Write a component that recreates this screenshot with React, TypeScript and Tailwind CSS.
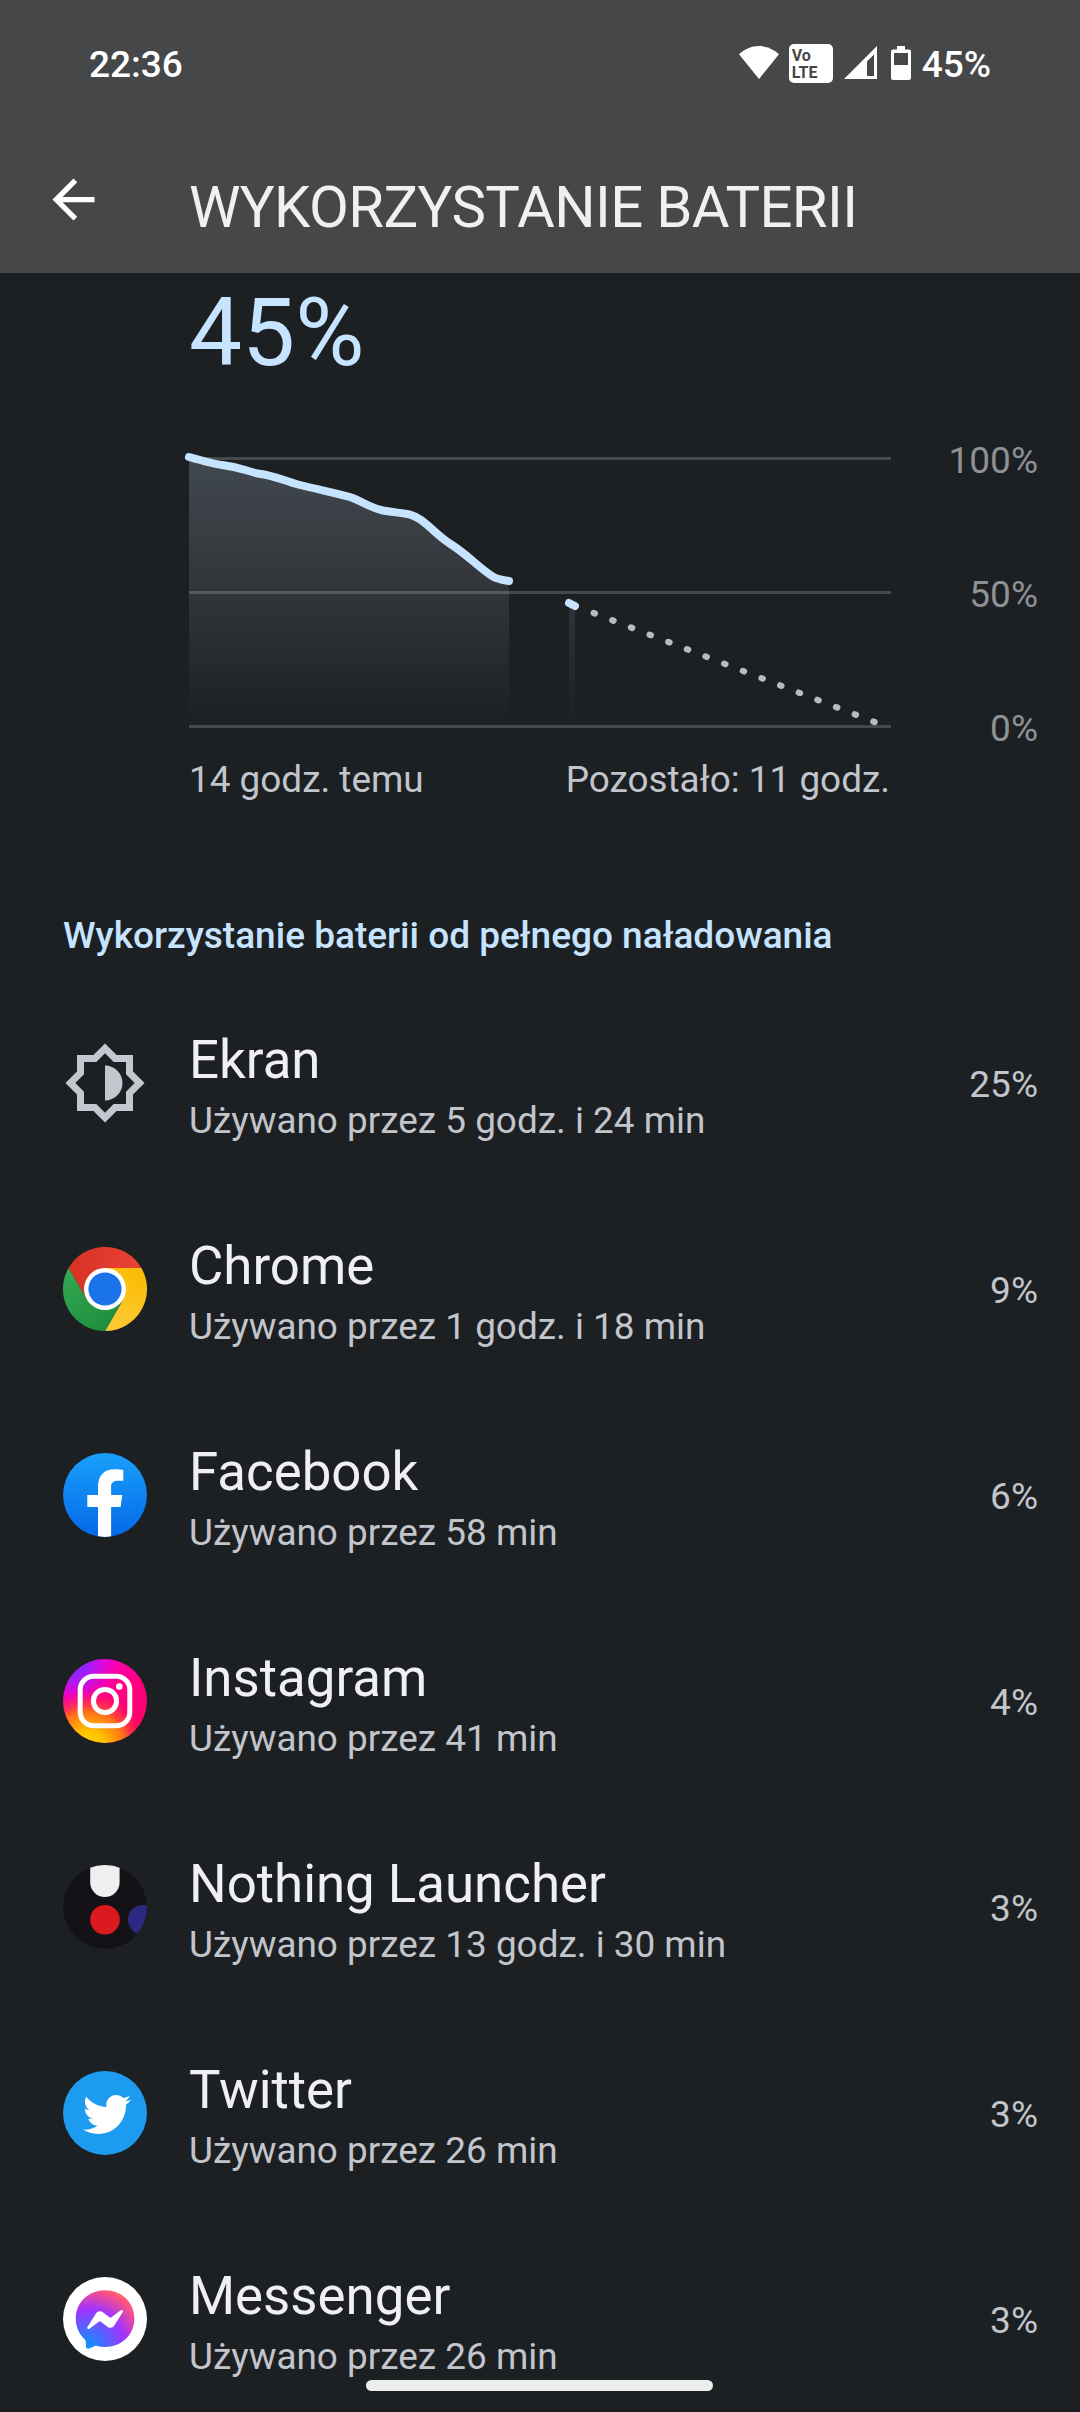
import type { ReactNode } from 'react';

interface UsageItem {
  name: string;
  time: string;
  percent: string;
  icon: ReactNode;
}

const ScreenIcon = () => (
  <svg viewBox="0 0 24 24" className="size-[84px]" fill="#c2c7d0">
    <path
      fillRule="evenodd"
      d="M20 8.69V4h-4.69L12 .69 8.69 4H4v4.69L.69 12 4 15.31V20h4.69L12 23.31 15.31 20H20v-4.69L23.31 12 20 8.69zm-2 5.79V18h-3.52L12 20.48 9.52 18H6v-3.52L3.52 12 6 9.52V6h3.52L12 3.52 14.48 6H18v3.52L20.48 12 18 14.48z"
    />
    <path d="M12 7v10c2.76 0 5-2.24 5-5s-2.24-5-5-5z" />
  </svg>
);

const ChromeIcon = () => (
  <svg viewBox="0 0 84 84" className="size-[84px]">
    <defs>
      <linearGradient id="chrome-red" x1="0" y1="0" x2="1" y2="0">
        <stop offset="0" stopColor="#d93025" />
        <stop offset="1" stopColor="#ea4335" />
      </linearGradient>
      <linearGradient id="chrome-green" x1="0.7" y1="1" x2="0.1" y2="0">
        <stop offset="0" stopColor="#1e8e3e" />
        <stop offset="1" stopColor="#34a853" />
      </linearGradient>
      <linearGradient id="chrome-yellow" x1="0.3" y1="1" x2="0.7" y2="0">
        <stop offset="0" stopColor="#fcc934" />
        <stop offset="1" stopColor="#fbbc04" />
      </linearGradient>
    </defs>
    <path d="M42 42 60.2 52.5 42 84A42 42 0 0 0 78.4 21H42z" fill="url(#chrome-yellow)" />
    <path d="M42 42V21h36.4A42 42 0 0 0 5.6 21l18.2 31.5z" fill="url(#chrome-red)" />
    <path d="M42 42 23.8 52.5 5.6 21A42 42 0 0 0 42 84l18.2-31.5z" fill="url(#chrome-green)" />
    <circle cx="42" cy="42" r="21" fill="#fff" />
    <circle cx="42" cy="42" r="16.6" fill="#1a73e8" />
  </svg>
);

const FacebookIcon = () => (
  <svg viewBox="0 0 84 84" className="size-[84px]">
    <defs>
      <linearGradient id="fb-bg" x1="0" y1="0" x2="0" y2="1">
        <stop offset="0" stopColor="#18a0fb" />
        <stop offset="1" stopColor="#0569e8" />
      </linearGradient>
      <clipPath id="fb-clip">
        <circle cx="42" cy="42" r="42" />
      </clipPath>
    </defs>
    <circle cx="42" cy="42" r="42" fill="url(#fb-bg)" />
    <path
      clipPath="url(#fb-clip)"
      d="M35 84V54H24.3V42H35v-8.4C35 22.2 41.4 16.2 51.6 16.2c3.5 0 6.6.4 8.7.8v10.8h-5.4c-5 0-6.8 2.4-6.8 6V42h11.2l-1.7 12h-9.5v30z"
      fill="#fff"
    />
  </svg>
);

const InstagramIcon = () => (
  <svg viewBox="0 0 84 84" className="size-[84px]">
    <defs>
      <linearGradient id="ig-base" x1="0.2" y1="0" x2="0.8" y2="1">
        <stop offset="0" stopColor="#f000e0" />
        <stop offset="0.45" stopColor="#ff0086" />
        <stop offset="1" stopColor="#ff0060" />
      </linearGradient>
      <radialGradient id="ig-purple" cx="0.14" cy="0.06" r="0.5">
        <stop offset="0" stopColor="#6a2cff" />
        <stop offset="0.4" stopColor="#9a20ff" stopOpacity="0.85" />
        <stop offset="1" stopColor="#e000f0" stopOpacity="0" />
      </radialGradient>
      <radialGradient id="ig-warm" cx="0.3" cy="1.08" r="0.72">
        <stop offset="0" stopColor="#ffdc00" />
        <stop offset="0.3" stopColor="#ffc400" />
        <stop offset="0.62" stopColor="#ff7a10" stopOpacity="0.95" />
        <stop offset="1" stopColor="#ff1060" stopOpacity="0" />
      </radialGradient>
    </defs>
    <circle cx="42" cy="42" r="42" fill="url(#ig-base)" />
    <circle cx="42" cy="42" r="42" fill="url(#ig-purple)" />
    <circle cx="42" cy="42" r="42" fill="url(#ig-warm)" />
    <g fill="none" stroke="#fff" strokeWidth="5">
      <rect x="17.2" y="17.2" width="49.6" height="49.6" rx="13.5" />
      <circle cx="42" cy="42" r="11.6" />
    </g>
    <circle cx="56.3" cy="27.5" r="3.3" fill="#fff" />
  </svg>
);

const NothingIcon = () => (
  <svg viewBox="0 0 84 84" className="size-[84px]">
    <defs>
      <clipPath id="nothing-clip">
        <circle cx="42" cy="42" r="42" />
      </clipPath>
    </defs>
    <g clipPath="url(#nothing-clip)">
      <rect width="84" height="84" fill="#151217" />
      <path d="M27.2 0h29.4v17.3a14.7 14.7 0 0 1-29.4 0z" fill="#efeff0" />
      <circle cx="42" cy="54.7" r="14.8" fill="#db1a20" />
      <circle cx="79.8" cy="54.7" r="14.8" fill="#2c2a80" />
    </g>
  </svg>
);

const TwitterIcon = () => (
  <svg viewBox="0 0 84 84" className="size-[84px]">
    <circle cx="42" cy="42" r="42" fill="#1d9bf0" />
    <path
      transform="translate(19.9 19.5) scale(0.0938)"
      d="M459.37 151.716c.325 4.548.325 9.097.325 13.645 0 138.72-105.583 298.558-298.558 298.558-59.452 0-114.68-17.219-161.137-47.106 8.447.974 16.568 1.299 25.34 1.299 49.055 0 94.213-16.568 130.274-44.832-46.132-.975-84.792-31.188-98.112-72.772 6.498.974 12.995 1.624 19.818 1.624 9.421 0 18.843-1.3 27.614-3.573-48.081-9.747-84.143-51.98-84.143-102.985v-1.299c13.969 7.797 30.214 12.67 47.431 13.319-28.264-18.843-46.781-51.005-46.781-87.391 0-19.492 5.197-37.36 14.294-52.954 51.655 63.675 129.3 105.258 216.365 109.807-1.624-7.797-2.599-15.918-2.599-24.04 0-57.828 46.782-104.934 104.934-104.934 30.213 0 57.502 12.67 76.67 33.137 23.715-4.548 46.456-13.32 66.599-25.34-7.798 24.366-24.366 44.833-46.132 57.827 21.117-2.273 41.584-8.122 60.426-16.243-14.292 20.791-32.161 39.308-52.628 54.253z"
      fill="#fff"
    />
  </svg>
);

const MessengerIcon = () => (
  <svg viewBox="0 0 84 84" className="size-[84px]">
    <defs>
      <radialGradient id="msgr" cx="0.19" cy="0.99" r="1.09">
        <stop offset="0" stopColor="#0099ff" />
        <stop offset="0.61" stopColor="#a033ff" />
        <stop offset="0.93" stopColor="#ff5280" />
        <stop offset="1" stopColor="#ff7061" />
      </radialGradient>
    </defs>
    <circle cx="42" cy="42" r="42" fill="#fff" />
    <path
      transform="translate(11.8 12.2) scale(0.1183)"
      d="M256.55 8C116.52 8 8 110.34 8 248.57c0 72.3 29.71 134.78 78.07 177.94 8.35 7.51 6.63 11.86 8.05 58.23A19.92 19.92 0 0 0 122 502.31c52.91-23.3 53.59-25.14 62.56-22.7C337.85 521.8 504 423.7 504 248.57 504 110.34 396.59 8 256.55 8zm149.24 185.13l-73 115.57a37.37 37.37 0 0 1-53.91 9.93l-58.08-43.47a15 15 0 0 0-18 0l-78.37 59.44c-10.46 7.93-24.16-4.6-17.11-15.67l73-115.57a37.36 37.36 0 0 1 53.91-9.93l58.06 43.46a15 15 0 0 0 18 0l78.41-59.38c10.44-7.98 24.14 4.54 17.09 15.62z"
      fill="url(#msgr)"
    />
  </svg>
);

const items: UsageItem[] = [
  { name: 'Ekran', time: 'Używano przez 5 godz. i 24 min', percent: '25%', icon: <ScreenIcon /> },
  { name: 'Chrome', time: 'Używano przez 1 godz. i 18 min', percent: '9%', icon: <ChromeIcon /> },
  { name: 'Facebook', time: 'Używano przez 58 min', percent: '6%', icon: <FacebookIcon /> },
  { name: 'Instagram', time: 'Używano przez 41 min', percent: '4%', icon: <InstagramIcon /> },
  { name: 'Nothing Launcher', time: 'Używano przez 13 godz. i 30 min', percent: '3%', icon: <NothingIcon /> },
  { name: 'Twitter', time: 'Używano przez 26 min', percent: '3%', icon: <TwitterIcon /> },
  { name: 'Messenger', time: 'Używano przez 26 min', percent: '3%', icon: <MessengerIcon /> },
];

function StatusBar() {
  return (
    <div className="flex h-[128px] items-center justify-between pl-[89px] pr-[89px] text-[37px] leading-[38px] font-medium text-white">
      <span className="pt-[2px]">22:36</span>
      <div className="flex items-center">
        <svg viewBox="0 0 40 33" className="mr-[10px] mb-[3px] h-[33px] w-10" fill="#fff">
          <path d="M20 33 0 8.3C5.4 3.2 12.4 0 20 0s14.6 3.2 20 8.3z" />
        </svg>
        <div className="mr-[11px] mb-px flex h-[39px] w-11 flex-col justify-center rounded-[5px] bg-white pl-[3px] text-[16px] leading-[17px] font-bold text-[#464749]">
          <span>Vo</span>
          <span>LTE</span>
        </div>
        <svg viewBox="0 0 33 33" className="mr-[14px] mb-[3px] h-[33px] w-[33px]" fill="#fff">
          <path fillRule="evenodd" d="M33 0v33H0zM30 8.5 23 15.5V30h7z" />
        </svg>
        <svg viewBox="0 0 20 34" className="mr-[11px] mb-[2px] h-[34px] w-5" fill="#fff">
          <path fillRule="evenodd" d="M6 0h8v3.5h4a2 2 0 0 1 2 2V32a2 2 0 0 1-2 2H2a2 2 0 0 1-2-2V5.500a2 2 0 0 1 2-2h4zM3 7v12h14V7z" />
        </svg>
        <span className="pt-[2px]">45%</span>
      </div>
    </div>
  );
}

function BatteryChart() {
  return (
    <div className="mt-[54px] flex h-[300px] shrink-0 pr-[42px] pl-[181px]">
      <svg viewBox="181 440 718 300" className="h-[300px] w-[718px]" fill="none">
        <defs>
          <linearGradient id="area" gradientUnits="userSpaceOnUse" x1="0" y1="457" x2="0" y2="726">
            <stop offset="0" stopColor="#c6e0f6" stopOpacity="0.21" />
            <stop offset="0.5" stopColor="#d8e0ec" stopOpacity="0.11" />
            <stop offset="1" stopColor="#e0e0e0" stopOpacity="0" />
          </linearGradient>
        </defs>
        <path d="M189 458.5h702M189 592.5h702M189 726.5h702" stroke="#46484b" strokeWidth="3" />
        <path
          d="M189 457C203 461 214 464 222 465C240 467 246 471 258 473.5C276 476 285 481 298 484.5C320 490 336 493 350 497C362 501 368 507 383 510.5C402 514 410 512 421 520C432 528 436 534 449 543C468 555 477 566 492 576C498 580 504 580 509 581V726H189z"
          fill="url(#area)"
        />
        <path d="M569 603h6v123h-6z" fill="url(#area)" />
        <path
          d="M189 457C203 461 214 464 222 465C240 467 246 471 258 473.5C276 476 285 481 298 484.5C320 490 336 493 350 497C362 501 368 507 383 510.5C402 514 410 512 421 520C432 528 436 534 449 543C468 555 477 566 492 576C498 580 504 580 509 581M569 603l6 3"
          stroke="#c6e4ff"
          strokeWidth="8"
          strokeLinecap="round"
          strokeLinejoin="round"
        />
        <path d="M593.7 613 875 722.2" stroke="#b4bdc1" strokeWidth="6.3" strokeLinecap="round" strokeDasharray="1.3 18.7" />
      </svg>
      <div className="flex flex-1 flex-col text-right text-[37px] leading-[41px] text-[#8e9195]">
        <span className="h-[134px] shrink-0">100%</span>
        <span className="h-[134px] shrink-0">50%</span>
        <span className="shrink-0">0%</span>
      </div>
    </div>
  );
}

function UsageRow({ name, time, percent, icon }: UsageItem) {
  return (
    <div className="flex h-[206px] shrink-0 items-center pr-[42px] pl-[63px]">
      {icon}
      <div className="flex flex-1 flex-col gap-2 pt-1 pl-[42px]">
        <span className="text-[52.8px] leading-[62px] text-[#f0f0f3]">{name}</span>
        <span className="text-[36.9px] leading-[43px] text-[#c2c5cb]">{time}</span>
      </div>
      <span className="pt-[2px] text-[37px] leading-[43px] text-[#c2c5cb]">{percent}</span>
    </div>
  );
}

export default function App() {
  return (
    <div className="relative flex h-[2412px] w-[1080px] flex-col overflow-hidden bg-[#1d2023] font-[Roboto,sans-serif]">
      <header className="h-[273px] shrink-0 bg-[#464749]">
        <StatusBar />
        <div className="flex h-[143px] items-center pl-[42px]">
          <svg viewBox="0 0 24 24" className="size-[63px]" fill="#fff">
            <path d="M20 11H7.83l5.59-5.59L12 4l-8 8 8 8 1.41-1.41L7.83 13H20z" />
          </svg>
          <h1 className="pt-[14px] pl-[84px] text-[58px] leading-[68px] tracking-[-0.6px] text-[#f0f0f3]">WYKORZYSTANIE BATERII</h1>
        </div>
      </header>

      <div className="h-[113px] shrink-0 pt-[5px] pl-[189px] text-[94.5px] leading-[110px] text-[#c6e4ff]">45%</div>

      <BatteryChart />

      <div className="mt-[18px] flex shrink-0 justify-between pr-[190px] pl-[189px] text-[36.9px] leading-[43px] text-[#c2c5cb]">
        <span>14 godz. temu</span>
        <span>Pozostało: 11 godz.</span>
      </div>

      <h2 className="mt-[113px] mb-[23px] pl-[63px] text-[37px] leading-[43px] font-medium text-[#c6e4ff]">
        Wykorzystanie baterii od pełnego naładowania
      </h2>

      {items.map((item) => (
        <UsageRow key={item.name} {...item} />
      ))}

      {/* gesture navigation handle */}
      <div className="absolute bottom-[21px] left-[366px] h-[11px] w-[347px] rounded-full bg-[#eceded]" />
    </div>
  );
}
